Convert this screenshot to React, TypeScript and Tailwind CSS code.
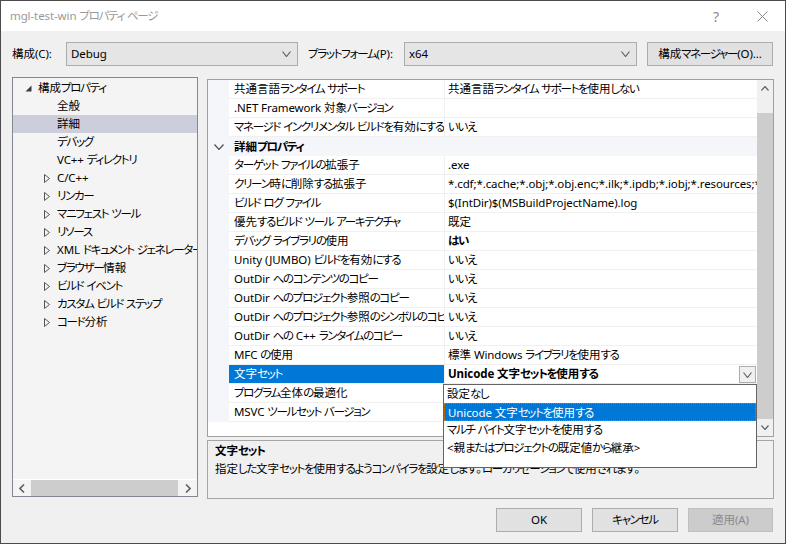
import React from "react";

const F = "font-['Noto_Sans','Noto_Sans_CJK_JP',sans-serif] [font-feature-settings:'palt'] text-[11.5px]";

const KANA = /[\u3040-\u30ff]/;
const IDEO = /[\u3000-\u303f\u4e00-\u9fff\uff00-\uffef]/;

// kana in the original UI font are much narrower than Noto's, so runs get their own tracking
function T({ s }: { s: string }) {
  const parts = s.match(/[\u3040-\u30ff]+|[\u3000-\u303f\u4e00-\u9fff\uff00-\uffef]+|[^\u3000-\u30ff\u4e00-\u9fff\uff00-\uffef]+/g) ?? [];
  return (
    <>
      {parts.map((p, i) => (
        <span
          key={i}
          className={KANA.test(p) ? "tracking-[-1.3px]" : IDEO.test(p) ? "tracking-[0px]" : "tracking-[-0.1px]"}
        >
          {p}
        </span>
      ))}
    </>
  );
}

type Prop = {
  name: string;
  value?: string;
  bold?: boolean;
  category?: boolean;
  selected?: boolean;
};

const PROPS: Prop[] = [
  { name: "共通言語ランタイム サポート", value: "共通言語ランタイム サポートを使用しない" },
  { name: ".NET Framework 対象バージョン", value: "" },
  { name: "マネージド インクリメンタル ビルドを有効にする", value: "いいえ" },
  { name: "詳細プロパティ", category: true },
  { name: "ターゲット ファイルの拡張子", value: ".exe" },
  {
    name: "クリーン時に削除する拡張子",
    value:
      "*.cdf;*.cache;*.obj;*.obj.enc;*.ilk;*.ipdb;*.iobj;*.resources;*.tlb;*.tli;*.tlh;*.tmp;*.rsp;*.pgc;*.pgd",
  },
  { name: "ビルド ログ ファイル", value: "$(IntDir)$(MSBuildProjectName).log" },
  { name: "優先するビルド ツール アーキテクチャ", value: "既定" },
  { name: "デバッグ ライブラリの使用", value: "はい", bold: true },
  { name: "Unity (JUMBO) ビルドを有効にする", value: "いいえ" },
  { name: "OutDir へのコンテンツのコピー", value: "いいえ" },
  { name: "OutDir へのプロジェクト参照のコピー", value: "いいえ" },
  { name: "OutDir へのプロジェクト参照のシンボルのコピー", value: "いいえ" },
  { name: "OutDir への C++ ランタイムのコピー", value: "いいえ" },
  { name: "MFC の使用", value: "標準 Windows ライブラリを使用する" },
  { name: "文字セット", value: "Unicode 文字セットを使用する", bold: true, selected: true },
  { name: "プログラム全体の最適化", value: "" },
  { name: "MSVC ツールセット バージョン", value: "" },
];

const TREE = [
  { label: "構成プロパティ", level: 0, icon: "open" },
  { label: "全般", level: 1 },
  { label: "詳細", level: 1, selected: true },
  { label: "デバッグ", level: 1 },
  { label: "VC++ ディレクトリ", level: 1 },
  { label: "C/C++", level: 1, icon: "closed" },
  { label: "リンカー", level: 1, icon: "closed" },
  { label: "マニフェスト ツール", level: 1, icon: "closed" },
  { label: "リソース", level: 1, icon: "closed" },
  { label: "XML ドキュメント ジェネレーター", level: 1, icon: "closed" },
  { label: "ブラウザー情報", level: 1, icon: "closed" },
  { label: "ビルド イベント", level: 1, icon: "closed" },
  { label: "カスタム ビルド ステップ", level: 1, icon: "closed" },
  { label: "コード分析", level: 1, icon: "closed" },
];

const OPTIONS = [
  "設定なし",
  "Unicode 文字セットを使用する",
  "マルチ バイト文字セットを使用する",
  "<親またはプロジェクトの既定値から継承>",
];

function Chevron({ up = false, color = "#606060", w = 9 }: { up?: boolean; color?: string; w?: number }) {
  const h = Math.round(w / 2) + 1;
  const pts = up
    ? `0.5,${h - 0.5} ${w / 2},0.5 ${w - 0.5},${h - 0.5}`
    : `0.5,0.5 ${w / 2},${h - 0.5} ${w - 0.5},0.5`;
  return (
    <svg width={w} height={h} viewBox={`0 0 ${w} ${h}`}>
      <polyline points={pts} fill="none" stroke={color} strokeWidth="1.2" />
    </svg>
  );
}

function SideArrow({ left = false }: { left?: boolean }) {
  return (
    <svg width="6" height="9" viewBox="0 0 6 9">
      <polyline
        points={left ? "5,0.5 1,4.5 5,8.5" : "1,0.5 5,4.5 1,8.5"}
        fill="none"
        stroke="#606060"
        strokeWidth="1.6"
      />
    </svg>
  );
}

function Combo({ value, width }: { value: string; width: string }) {
  return (
    <div
      className={`flex h-[24px] items-center justify-between border border-[#acacac] bg-[#e5e5e5] pl-[4px] pr-[6px] ${width}`}
    >
      <span>
        <T s={value} />
      </span>
      <Chevron />
    </div>
  );
}

function Button({ label, width, disabled = false }: { label: string; width: string; disabled?: boolean }) {
  return (
    <div
      className={`flex h-[24px] items-center justify-center border ${width} ${
        disabled ? "border-[#bfbfbf] bg-[#cccccc] text-[#8a8a8a]" : "border-[#adadad] bg-[#e1e1e1]"
      }`}
    >
      <T s={label} />
    </div>
  );
}

function Tree() {
  return (
    <div className="flex h-[420px] w-[186px] shrink-0 flex-col overflow-hidden border border-[#828790] bg-[#f4f4f4]">
      <div className="flex-1 pt-[1px]">
        {TREE.map((t) => (
          <div
            key={t.label}
            className={`flex h-[18px] items-center whitespace-nowrap ${t.level === 0 ? "pl-[11px]" : "pl-[30px]"} ${
              t.selected ? "bg-[#cccedb]" : ""
            }`}
          >
            <span className="flex w-[14px] shrink-0 items-center pl-[1px]">
              {t.icon === "open" && (
                <svg width="7" height="7" viewBox="0 0 7 7">
                  <polygon points="6.5,0.5 6.5,6.5 0.5,6.5" fill="#3c3c3c" />
                </svg>
              )}
              {t.icon === "closed" && (
                <svg width="7" height="9" viewBox="0 0 7 9">
                  <polygon points="0.5,0.5 5.5,4.5 0.5,8.5" fill="none" stroke="#555" />
                </svg>
              )}
            </span>
            <span className="leading-[18px]">
              <T s={t.label} />
            </span>
          </div>
        ))}
      </div>
      <div className="flex h-[17px] items-stretch border-t border-white">
        <div className="flex w-[18px] items-center justify-center">
          <SideArrow left />
        </div>
        <div className="flex-1 bg-[#cdcdcd]" />
        <div className="flex w-[19px] items-center justify-center">
          <SideArrow />
        </div>
      </div>
    </div>
  );
}

function Grid() {
  return (
    <div className="relative mt-[2px] flex h-[358px] border border-[#a0a0a0] bg-white">
      <div className="w-[549px]">
        {PROPS.map((p) =>
          p.category ? (
            <div key={p.name} className="flex h-[19px] bg-[#f4f6fa]">
              <div className="flex w-[21px] items-center justify-center">
                <Chevron w={10} color="#505050" />
              </div>
              <div className="pl-[5px] font-bold leading-[19px]">
                <T s={p.name} />
              </div>
            </div>
          ) : (
            <div key={p.name} className="flex h-[19px]">
              <div className="w-[21px] bg-[#f4f6fa]" />
              <div
                className={`w-[216px] overflow-hidden whitespace-nowrap border-r border-b border-[#f0f0f0] pl-[5px] leading-[18px] ${
                  p.selected ? "bg-[#0078d7] text-white" : ""
                }`}
              >
                <T s={p.name} />
              </div>
              <div className="relative w-[312px] border-b border-[#f0f0f0]">
                <div className={`overflow-hidden whitespace-nowrap pl-[3px] leading-[18px] ${p.bold ? "font-bold" : ""}`}>
                  <T s={p.value ?? ""} />
                </div>
                {p.selected && (
                  <>
                    <div className="absolute right-[1px] top-[1px] flex h-[17px] w-[17px] items-center justify-center border border-[#adadad] bg-[#f0f0f0]">
                      <Chevron />
                    </div>
                    <div className="absolute left-[-2px] top-[19px] z-10 h-[84px] w-[314px] border border-[#646464] bg-white">
                      {OPTIONS.map((o, i) => (
                        <div
                          key={o}
                          className={`h-[18px] whitespace-nowrap pl-[3px] leading-[17px] ${
                            i === 1 ? "border border-dotted border-[#c07a20] bg-[#0078d7] pl-[2px] text-white" : ""
                          }`}
                        >
                          <T s={o} />
                        </div>
                      ))}
                    </div>
                  </>
                )}
              </div>
            </div>
          )
        )}
      </div>
      <div className="flex w-[16px] flex-col bg-[#f0f0f0]">
        <div className="flex h-[17px] items-center justify-center">
          <Chevron up w={8} />
        </div>
        <div className="flex flex-1 flex-col pt-[16px]">
          <div className="flex-1 bg-[#cdcdcd]" />
        </div>
        <div className="flex h-[17px] items-center justify-center">
          <Chevron w={8} />
        </div>
      </div>
    </div>
  );
}

export default function App() {
  return (
    <div className={`${F} flex h-[544px] w-[786px] flex-col border border-[#4b4b4b] bg-[#f0f0f0] text-black`}>
      <div className="flex h-[30px] shrink-0 items-center bg-white pl-[9px]">
        <span className="text-[#9a9a9a]">
          <T s="mgl-test-win プロパティ ページ" />
        </span>
        <span className="ml-auto flex w-[46px] justify-center text-[14px] text-[#8a8a8a]">?</span>
        <span className="flex w-[46px] justify-center">
          <svg width="11" height="11" viewBox="0 0 11 11">
            <path d="M0.5 0.5 L10.5 10.5 M10.5 0.5 L0.5 10.5" stroke="#8a8a8a" strokeWidth="1" />
          </svg>
        </span>
      </div>

      <div className="flex h-[46px] shrink-0 items-center px-[11px]">
        <span className="w-[54px]">
          <T s="構成(C):" />
        </span>
        <Combo value="Debug" width="w-[232px]" />
        <span className="ml-[10px] w-[96px] whitespace-nowrap">
          <T s="プラットフォーム(P):" />
        </span>
        <Combo value="x64" width="w-[233px]" />
        <div className="ml-[10px]">
          <Button label="構成マネージャー(O)..." width="w-[126px]" />
        </div>
      </div>

      <div className="flex h-[422px] shrink-0 gap-[9px] px-[11px]">
        <Tree />
        <div className="flex w-[567px] flex-col">
          <Grid />
          <div className="mt-[3px] h-[59px] border border-[#a5a5a5] bg-[#f0f0f0] px-[7px] pt-[1px]">
            <div className="font-bold leading-[18px]">
              <T s="文字セット" />
            </div>
            <div className="leading-[18px]">
              <T s="指定した文字セットを使用するようコンパイラを設定します。ローカリゼーションで使用されます。" />
            </div>
          </div>
        </div>
      </div>

      <div className="mt-[9px] flex justify-end gap-[10px] pr-[12px]">
        <Button label="OK" width="w-[86px]" />
        <Button label="キャンセル" width="w-[86px]" />
        <Button label="適用(A)" width="w-[85px]" disabled />
      </div>
    </div>
  );
}
